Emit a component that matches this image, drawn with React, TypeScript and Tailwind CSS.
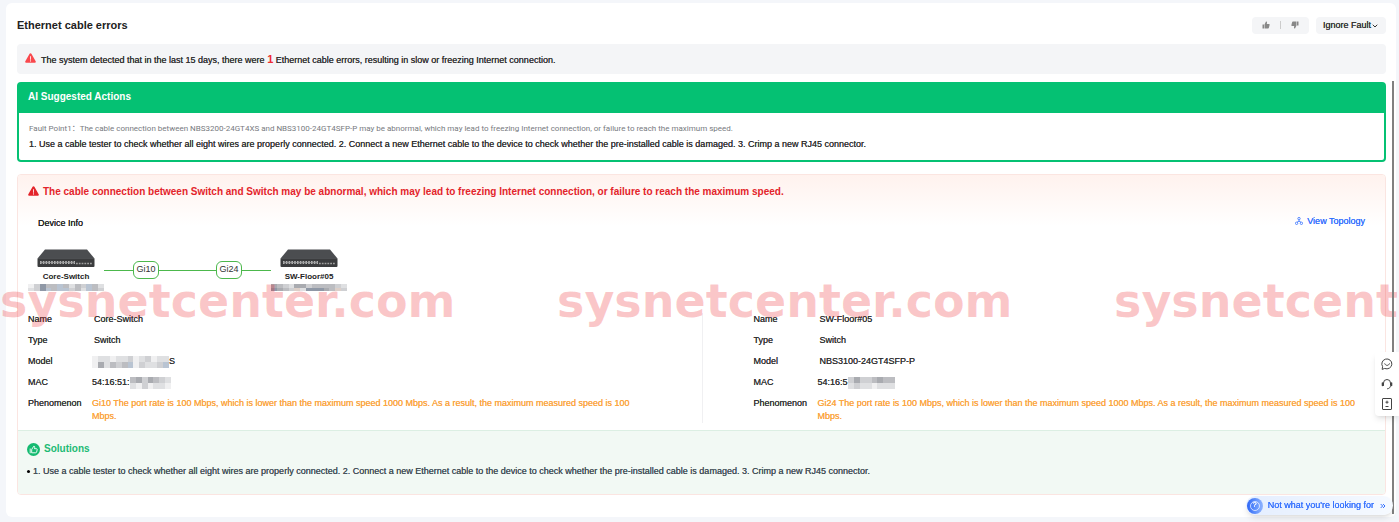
import React from 'react';
import { ChevronDown, ChevronsRight } from 'lucide-react';

interface DeviceDetail {
  name: string;
  type: string;
  model: React.ReactNode;
  mac: React.ReactNode;
  phenomenon: string;
}

const SUGGESTION =
  '1. Use a cable tester to check whether all eight wires are properly connected. 2. Connect a new Ethernet cable to the device to check whether the pre-installed cable is damaged. 3. Crimp a new RJ45 connector.';

const WATERMARKS = ['left', 'middle', 'right'];

// censored values, one string per pixel row, each character is a shade
const SHADES: Record<string, string> = {
  a: '#f0f0f1',
  b: '#dfe0e2',
  c: '#cfd0d3',
  d: '#bcbdc1',
  e: '#a9abb0',
  f: '#b9c4d2',
  g: '#8f98a6',
  h: '#dccfc8',
};

const Mosaic: React.FC<{ rows: string[]; className: string }> = ({ rows, className }) => (
  <svg className={className} viewBox={`0 0 ${rows[0].length} ${rows.length}`} preserveAspectRatio="none" shapeRendering="crispEdges" aria-hidden="true">
    {rows.map((row, y) =>
      row.split('').map((s, x) => <rect key={`${x}-${y}`} x={x} y={y} width="1" height="1" fill={SHADES[s]} />)
    )}
  </svg>
);

const WarningIcon: React.FC<{ className: string }> = ({ className }) => (
  <svg className={`mb-[3px] h-[10px] w-[11px] ${className}`} viewBox="0 0 12 11" aria-hidden="true">
    <path d="M6 0.3c.5 0 .8.2 1 .6l4.700 8.300c.4.8 0 1.500-.9 1.500H1.200c-.9 0-1.300-.7-.9-1.500L5 .9c.2-.4.500-.6 1-.6z" fill="currentColor" />
    <path d="M6 4v3" stroke="#fff" strokeWidth="0.900" strokeLinecap="round" />
    <circle cx="6" cy="8.700" r=".6" fill="#fff" />
  </svg>
);

const ThumbIcon: React.FC<{ className: string }> = ({ className }) => (
  <svg className={className} viewBox="0 0 16 16" fill="currentColor" aria-hidden="true">
    <path d="M1 7h3v8H1zM5 7l3-6c1.500 0 2.300 1 2 2.500L9.600 6H14c1 0 1.500.8 1.300 1.700l-1.500 6c-.2.8-.8 1.300-1.600 1.300H5z" />
  </svg>
);

const SwitchImage: React.FC = () => (
  <svg className="h-[19px] w-[58px]" viewBox="0 0 58 19" aria-hidden="true">
    <path d="M8 0.500h42l7.500 9h-57z" fill="#4b4d50" />
    <rect x="0.500" y="9" width="57" height="9" rx="1" fill="#3b3c3e" />
    <path d="M1 9.500h56" stroke="#5b5d60" strokeWidth="0.600" />
    <path d="M3 13.500h35" stroke="#b4b4b4" strokeWidth="3" strokeDasharray="1.600 1.200" />
    <path d="M3 13.500h35" stroke="#98999b" strokeWidth="0.800" />
    <path d="M39 14.500h16" stroke="#a0a0a0" strokeWidth="1.500" strokeDasharray="1.800 1" />
  </svg>
);

const Device: React.FC<{ name: string; rows: string[] }> = ({ name, rows }) => (
  <div className="flex w-[76px] flex-col items-center">
    <SwitchImage />
    <span className="mt-[3px] text-[8px] leading-3 font-bold text-[#222] [text-shadow:none]">{name}</span>
    <Mosaic rows={rows} className="mt-px h-[7px] w-full" />
  </div>
);

const PortTag: React.FC<{ label: string }> = ({ label }) => (
  <span className="flex h-[18px] w-[26px] items-center justify-center rounded-md border border-[#4cb84c] bg-white text-[9px] text-[#333] [text-shadow:none]">{label}</span>
);

const DeviceTable: React.FC<{ device: DeviceDetail }> = ({ device }) => (
  <dl className="grid grid-cols-[64px_1fr] gap-y-2 text-[9px] leading-[13px] text-[#333]">
    <dt>Name</dt>
    <dd className="pl-[2px]">{device.name}</dd>
    <dt>Type</dt>
    <dd className="pl-[2px]">{device.type}</dd>
    <dt>Model</dt>
    <dd className="flex items-center">{device.model}</dd>
    <dt>MAC</dt>
    <dd className="flex items-center">{device.mac}</dd>
    <dt>Phenomenon</dt>
    <dd className="text-[#fba540]">{device.phenomenon}</dd>
  </dl>
);

const coreSwitch: DeviceDetail = {
  name: 'Core-Switch',
  type: 'Switch',
  model: (
    <>
      <Mosaic rows={['abbabbcabcabb', 'aebdcdfacbbcf']} className="h-3 w-[77px]" />S
    </>
  ),
  mac: (
    <>
      54:16:51:
      <Mosaic rows={['decedcb', 'bacabba']} className="h-3 w-[41px]" />
    </>
  ),
  phenomenon: 'Gi10 The port rate is 100 Mbps, which is lower than the maximum speed 1000 Mbps. As a result, the maximum measured speed is 100 Mbps.',
};

const floorSwitch: DeviceDetail = {
  name: 'SW-Floor#05',
  type: 'Switch',
  model: <span className="pl-[2px]">NBS3100-24GT4SFP-P</span>,
  mac: (
    <>
      54:16:5
      <Mosaic rows={['ceccdedd', 'bcbbabbb']} className="h-3 w-[47px]" />
    </>
  ),
  phenomenon: 'Gi24 The port rate is 100 Mbps, which is lower than the maximum speed 1000 Mbps. As a result, the maximum measured speed is 100 Mbps.',
};

const SideTools: React.FC = () => (
  <div className="fixed top-[352px] right-0 flex w-6 flex-col items-center gap-2 rounded-l bg-white py-[6px] text-[#444] shadow-md">
    <button aria-label="Chat">
      <svg className="h-3 w-3" viewBox="0 0 12 12" fill="none" stroke="currentColor" strokeLinecap="round" strokeLinejoin="round">
        <path d="M1.200 11l.4-2.400A5 5 0 1 1 4 10.600z" />
        <path d="M3.800 5.800c.8 2.200 3.800 2.200 4.600 0" />
      </svg>
    </button>
    <button aria-label="Support">
      <svg className="h-3 w-3" viewBox="0 0 12 12" fill="none" stroke="currentColor" strokeLinecap="round">
        <path d="M2.500 7.500V5a3.500 3.500 0 0 1 7 0v2.500c0 1.800-1 3-3 3.300" />
        <path d="M1.500 5v2.500M10.500 5v2.500" strokeWidth="1.600" />
      </svg>
    </button>
    <button aria-label="Feedback">
      <svg className="h-3 w-3" viewBox="0 0 12 12" fill="none" stroke="currentColor">
        <rect x="1.500" y="0.500" width="9" height="11" rx="0.500" />
        <path d="M4.500 4.200h3M6 2.700v3M4.500 8.500h3" />
      </svg>
    </button>
  </div>
);

export default function App() {
  return (
    <div className="relative min-h-screen overflow-hidden bg-[#f4f6fa] pt-[3px] pr-[3px] pb-[6px] pl-[6px] font-['Liberation_Sans',Arial,sans-serif] [text-shadow:0_0_0_currentColor]">
      <main className="rounded-md bg-white pt-[13px] pr-[10px] pb-[22px] pl-[11px]">
        <header className="flex h-[18px] items-center justify-between">
          <h1 className="text-[11px] font-bold text-[#222] [text-shadow:none]">Ethernet cable errors</h1>
          <div className="flex gap-[7px]">
            <div className="flex h-[17px] w-[57px] items-center justify-evenly rounded-sm bg-[#f4f5f7] text-[#888]">
              <button aria-label="Helpful"><ThumbIcon className="h-2 w-2" /></button>
              <span className="h-2 w-px bg-[#ccc]" />
              <button aria-label="Not helpful"><ThumbIcon className="h-2 w-2 rotate-180" /></button>
            </div>
            <button className="flex h-[17px] w-[70px] items-center justify-center rounded-sm bg-[#f4f5f7] pt-px text-[9px] text-[#333] [text-shadow:0_0_0_currentColor]">
              Ignore Fault
              <ChevronDown size={8} strokeWidth={3} />
            </button>
          </div>
        </header>

        <div className="mt-[10px] flex h-[30px] items-center gap-[5px] rounded-sm bg-[#f4f5f7] px-2 text-[9px] text-[#333]">
          <WarningIcon className="text-[#f9484d]" />
          <p>
            The system detected that in the last 15 days, there were <strong className="text-[11px] text-[#ee2b31] [text-shadow:none]">1</strong> Ethernet cable errors, resulting in slow or freezing Internet connection.
          </p>
        </div>

        <section className="mt-2 rounded border-2 border-[#05c173] bg-white">
          <h2 className="bg-[#05c173] px-[9px] pt-[5px] pb-2 text-[10px] leading-4 font-bold text-white [text-shadow:none]">AI Suggested Actions</h2>
          <div className="px-[10px] pt-[9px] pb-[9px]">
            <p className="mb-[2px] font-[Roboto,'Noto_Sans_CJK_SC',sans-serif] text-[8px] leading-[14px] text-[#777a80] [text-shadow:none]">
              Fault Point1：The cable connection between NBS3200-24GT4XS and NBS3100-24GT4SFP-P may be abnormal, which may lead to freezing Internet connection, or failure to reach the maximum speed.
            </p>
            <p className="text-[9px] leading-[13px] text-[#333]">{SUGGESTION}</p>
          </div>
        </section>

        <section className="mt-3 overflow-hidden rounded border border-[#fbe5e1]">
          <div className="bg-linear-to-b from-[#fff2ee] to-white to-20% px-[10px] pt-[9px] pb-[7px]">
            <h2 className="flex items-center gap-1 text-[10px] leading-4 font-bold text-[#e3242b] [text-shadow:none]">
              <WarningIcon className="text-[#e3242b]" />
              The cable connection between Switch and Switch may be abnormal, which may lead to freezing Internet connection, or failure to reach the maximum speed.
            </h2>
            <div className="mt-[13px] flex justify-between px-[10px]">
              <h3 className="pt-[2px] text-[9px] leading-4 text-[#222]">Device Info</h3>
              <a href="#topology" className="flex items-center gap-1 self-start text-[9px] leading-4 text-[#3370ff]">
                <svg className="h-2 w-2" viewBox="0 0 8 8" fill="none" stroke="currentColor" strokeWidth="0.800" aria-hidden="true">
                  <circle cx="4" cy="1.600" r="1.200" />
                  <circle cx="1.600" cy="6.300" r="1.200" />
                  <circle cx="6.400" cy="6.300" r="1.200" />
                  <path d="M4 2.800v1.400M2 5.200l2-1 2 1" />
                </svg>
                View Topology
              </a>
            </div>
            <div className="mt-[18px] flex items-start">
              <Device name="Core-Switch" rows={['acgddfdbdcfdb', 'bcgfdffcdbfdc']} />
              <div className="mt-3 flex items-center">
                <span className="h-px w-[29px] bg-[#4cb84c]" />
                <PortTag label="Gi10" />
                <span className="h-px w-[57px] bg-[#4cb84c]" />
                <PortTag label="Gi24" />
                <span className="h-px w-[29px] bg-[#4cb84c]" />
              </div>
              <Device name="SW-Floor#05" rows={['edcbeecddddcb', 'gedchbgggedhc']} />
            </div>
            <div className="mt-[22px] grid grid-cols-2">
              <div className="pr-[52px]"><DeviceTable device={coreSwitch} /></div>
              <div className="border-l border-[#f0f0f2] pr-[18px] pl-[51px]"><DeviceTable device={floorSwitch} /></div>
            </div>
          </div>
          <div className="border-t border-[#dcefe3] bg-[#f2f9f4] px-[9px] pt-[10px] pb-4">
            <h2 className="flex items-center gap-1 text-[10px] leading-4 font-bold text-[#1dbb74] [text-shadow:none]">
              <svg className="h-[13px] w-[13px]" viewBox="0 0 13 13" fill="none" aria-hidden="true">
                <circle cx="6.500" cy="6.500" r="6.500" fill="#14ba70" />
                <path d="M5 9.800h3.700c.5 0 .8-.3.900-.7l.6-2.500c.1-.5-.2-.9-.7-.9H7.400l.3-1.300c.2-.7-.2-1.200-.8-1.300L5 5.900zM3.200 5.900v3.900" stroke="#fff" strokeWidth="0.900" strokeLinejoin="round" strokeLinecap="round" />
              </svg>
              Solutions
            </h2>
            <ul className="mt-2 text-[9px] leading-[13px] text-[#445058]">
              <li className="flex items-center gap-[3px]">
                <span className="h-[3px] w-[3px] rounded-full bg-black" />
                {SUGGESTION}
              </li>
            </ul>
          </div>
        </section>
      </main>

      {/* watermark strip across the page */}
      <div className="pointer-events-none absolute inset-x-0 top-[274px] flex overflow-hidden font-['DejaVu_Sans',sans-serif] text-[46px] leading-[54px] font-bold text-[#ee1c24]/25 [text-shadow:none]" aria-hidden="true">
        {WATERMARKS.map(id => (
          <span key={id} className="w-[557px] shrink-0">sysnetcenter.com</span>
        ))}
      </div>

      <div className="absolute top-[81px] right-[5px] bottom-[9px] w-[2px] bg-[#808080]" />
      <SideTools />
      <button className="fixed right-[6px] bottom-[7px] flex h-[19px] items-center gap-[5px] rounded-full bg-linear-to-r from-[#e4eeff] to-[#f6faff] pr-[6px] pl-[1px] text-[9px] text-[#3370ff] shadow-md [text-shadow:0_0_0_currentColor]">
        <span className="flex h-4 w-4 items-center justify-center rounded-full bg-linear-to-r from-[#2f66f5] to-[#8fb4ff] text-white">
          <span className="flex h-[10px] w-[10px] items-center justify-center rounded-full border border-white/70 text-[7px]">?</span>
        </span>
        Not what you're looking for
        <ChevronsRight size={8} strokeWidth={3} />
      </button>
    </div>
  );
}
